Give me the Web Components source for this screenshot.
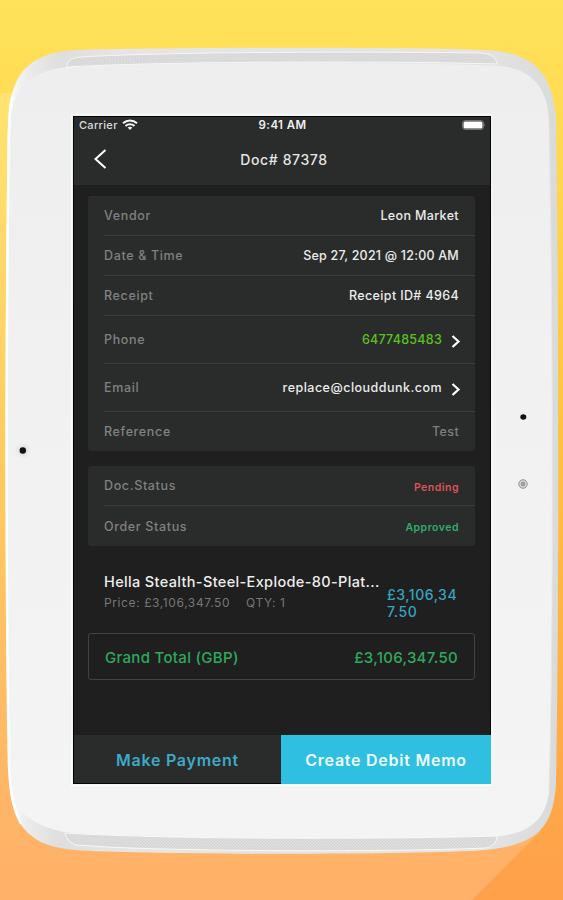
<!DOCTYPE html>
<html lang="en">
<head>
<meta charset="utf-8">
<title>Doc# 87378</title>
<style>
    body {
        margin: 0;
        font-family: Inter, "Liberation Sans", sans-serif;
    }
</style>
</head>
<body>
<tablet-frame>
    <doc-screen>
        <status-bar slot="top" carrier="Carrier" time="9:41 AM"></status-bar>
        <nav-bar slot="top">Doc# 87378</nav-bar>
        <info-card>
            <info-row label="Vendor">Leon Market</info-row>
            <info-row label="Date &amp; Time" style="--value-ls: .22px">Sep 27, 2021 @ 12:00 AM</info-row>
            <info-row label="Receipt">Receipt ID# 4964</info-row>
            <info-row label="Phone" link style="--value-color: #5bc31d; --value-ls: .25px">6477485483</info-row>
            <info-row label="Email" link style="--value-ls: .48px">replace@clouddunk.com</info-row>
            <info-row label="Reference" style="--value-color: #7d7e7e">Test</info-row>
        </info-card>
        <info-card>
            <info-row label="Doc.Status" small style="--value-color: #dd5558">Pending</info-row>
            <info-row label="Order Status" small style="--value-color: #2fae6c">Approved</info-row>
        </info-card>
        <line-item price="£3,106,347.50" qty="1" total="£3,106,347.50">Hella Stealth-Steel-Explode-80-Plat...</line-item>
        <grand-total amount="£3,106,347.50">Grand Total (GBP)</grand-total>
        <action-button slot="actions">Make Payment</action-button>
        <action-button slot="actions" primary>Create Debit Memo</action-button>
    </doc-screen>
</tablet-frame>

<script>
function defineElement(name, html, setup) {
    const template = document.createElement('template');
    template.innerHTML = html;

    customElements.define(name, class extends HTMLElement {
        constructor() {
            super();
            this.attachShadow({ mode: 'open' });
            this.shadowRoot.appendChild(template.content.cloneNode(true));
        }

        connectedCallback() {
            if (setup) {
                setup(this, this.shadowRoot);
            }
        }
    });
}

defineElement('tablet-frame', `
    <style>
        :host {
            display: block;
            position: relative;
            box-sizing: border-box;
            width: 563px;
            height: 900px;
            padding: 116px 72px 116px 73px;
            overflow: hidden;
        }

        svg {
            position: absolute;
            inset: 0;
        }

        .screen {
            position: relative;
            height: 668px;
            width: 418px;
        }
    </style>
    <svg width="563" height="900" viewBox="0 0 563 900">
        <defs>
            <linearGradient id="sky" x1="0" y1="0" x2="0" y2="1">
                <stop offset="0" stop-color="#ffe25a"/>
                <stop offset=".14" stop-color="#ffdb52"/>
                <stop offset=".5" stop-color="#ffc140"/>
                <stop offset="1" stop-color="#ffa04b"/>
            </linearGradient>
            <linearGradient id="face" x1="0" y1="0" x2="0" y2="1">
                <stop offset="0" stop-color="#eeeeee"/>
                <stop offset=".4" stop-color="#f1f1f1"/>
                <stop offset="1" stop-color="#f4f4f4"/>
            </linearGradient>
            <linearGradient id="edge" x1="0" y1="0" x2="1" y2="0">
                <stop offset="0" stop-color="#ffffff"/>
                <stop offset=".04" stop-color="#ebebeb"/>
                <stop offset=".1" stop-color="#dedede"/>
                <stop offset=".2" stop-color="#e5e5e5"/>
                <stop offset=".85" stop-color="#e4e4e4"/>
                <stop offset="1" stop-color="#d9dadb"/>
            </linearGradient>
            <radialGradient id="halo">
                <stop offset="0" stop-color="#c9c9c9"/>
                <stop offset="1" stop-color="#f2f2f2" stop-opacity="0"/>
            </radialGradient>
            <pattern id="mesh" width="3" height="3" patternUnits="userSpaceOnUse">
                <rect width="3" height="3" fill="#dfdfdf"/>
                <path d="M0 0L3 3M3 0L0 3" stroke="#d2d2d2" stroke-width=".6"/>
            </pattern>
        </defs>
        <rect width="563" height="900" fill="url(#sky)"/>
        <path d="M0 93L40 93V820H540V832L472 900H0Z" fill="#fff" opacity=".17"/>
        <!-- shell -->
        <path d="M8 125C9 78 25 53 75 50C145 47.500 420 46.500 480 50C535 51 552 73 556 118C559 300 559 640 556 784C553 825 540 845 485 850C420 855 145 855 75 850C33 847 14 828 10 790C4 640 5 300 8 125Z" fill="url(#edge)"/>
        <path d="M9 125C13 90 27 72 66 67C120 62 430 62 500 66C532 69 548 88 549 122C553 300 554 640 549 792C546 818 530 833 500 836C430 839.500 120 839 64 832C35 826 15 813 11 790C5 640 6 300 9 125Z" fill="url(#face)"/>
        <path d="M12 97C9.500 108 8.500 135 8.500 165C6 330 6 620 9 765C10 795 14 810 21 824" fill="none" stroke="#fff" stroke-width="2.500"/>
        <path d="M549 122C553 300 554 640 549 792" fill="none" stroke="#e5e5e5" stroke-width="1"/>
        <!-- speaker grilles -->
        <path d="M67 67C67 61 70 58.500 80 57C170 51.500 380 51.500 480 53C491 53.500 496 57 497 64C400 61 170 61 67 67Z" fill="url(#mesh)" stroke="#f6f6f6" stroke-width="1"/>
        <path d="M65 833C180 840 400 839 497 836C497 842 493 847 486 848C400 852 160 852 76 845C70 843 66 839 65 833Z" fill="url(#mesh)" stroke="#f8f8f8" stroke-width="1"/>
        <!-- camera and sensors -->
        <circle cx="23" cy="450.500" r="10" fill="url(#halo)"/>
        <circle cx="22.800" cy="450.500" r="3.200" fill="#111"/>
        <ellipse cx="523.300" cy="417" rx="3" ry="2.700" fill="#111"/>
        <circle cx="523" cy="484" r="4.200" fill="#dcdcdc" stroke="#8d8d8d"/>
        <circle cx="523" cy="484" r="1.900" fill="#aaa" stroke="#777" stroke-width=".7"/>
        <rect x="71.500" y="114.500" width="420.500" height="671" fill="none" stroke="#fff" stroke-opacity=".7"/>
    </svg>
    <div class="screen"><slot></slot></div>
`);

defineElement('doc-screen', `
    <style>
        :host {
            display: flex;
            flex-direction: column;
            box-sizing: border-box;
            height: 100%;
            border: 1px solid #050606;
            background: #1e1f1e;
            color: #eee;
        }

        .top {
            height: 68px;
            background: #2a2b2b;
        }

        main {
            flex: 1;
            display: flex;
            flex-direction: column;
            padding: 11px 15px 0 14px;
        }

        footer {
            display: flex;
            height: 49px;
            margin: 0 -1px -1px 0;
        }
    </style>
    <div class="top"><slot name="top"></slot></div>
    <main><slot></slot></main>
    <footer><slot name="actions"></slot></footer>
`);

defineElement('status-bar', `
    <style>
        :host {
            display: grid;
            grid-template-columns: 1fr auto 1fr;
            align-items: center;
            height: 16px;
            padding: 0 4px 0 5px;
            font-size: 11px;
            font-weight: 500;
            color: #ddd;
        }

        .left {
            display: flex;
            align-items: center;
            gap: 4px;
        }

        .carrier {
            letter-spacing: .3px;
        }

        .time {
            font-size: 11.5px;
            font-weight: 600;
            letter-spacing: .4px;
            color: #f0f0f0;
        }

        .battery {
            justify-self: end;
        }
    </style>
    <div class="left">
        <span class="carrier"></span>
        <svg width="16" height="12" viewBox="0 0 16 12" fill="none" stroke="#f2f2f2" stroke-width="2">
            <path d="M1 4.200C5 .5 11 .5 15 4.200M3.500 6.900C6 4.700 10 4.700 12.500 6.900"/>
            <path d="M5.600 8.500C7 7.400 9 7.400 10.400 8.500L8 11Z" fill="#f2f2f2" stroke="none"/>
        </svg>
    </div>
    <span class="time"></span>
    <svg class="battery" width="24" height="10" viewBox="0 0 24 10">
        <rect x=".5" y=".5" width="21" height="9" rx="2.500" fill="none" stroke="#6f7070"/>
        <rect x="1.500" y="1.500" width="19" height="7" rx="1.500" fill="#fff"/>
        <path d="M22.500 3.500Q24 5 22.500 6.500Z" fill="#8a8a8a"/>
    </svg>
`, (host, root) => {
    root.querySelector('.carrier').textContent = host.getAttribute('carrier');
    root.querySelector('.time').textContent = host.getAttribute('time');
});

defineElement('nav-bar', `
    <style>
        :host {
            display: grid;
            grid-template-columns: 1fr auto 1fr;
            align-items: center;
            height: 52px;
            padding: 0 19px 0 20px;
            box-sizing: border-box;
            font-size: 14px;
            font-weight: 500;
            letter-spacing: .6px;
            color: #e6e6e6;
        }

        .title {
            padding-left: 3px;
        }
    </style>
    <svg width="13" height="20" viewBox="0 0 13 20">
        <path d="M11.500 1L1.500 10L11.500 19" fill="none" stroke="#fff" stroke-width="2"/>
    </svg>
    <span class="title"><slot></slot></span>
`);

defineElement('info-card', `
    <style>
        :host {
            display: block;
            width: 387px;
            margin-bottom: 15px;
            border-radius: 3px;
            background: #2a2b2b;
        }
    </style>
    <slot></slot>
`);

defineElement('info-row', `
    <style>
        :host {
            display: flex;
            align-items: center;
            justify-content: space-between;
            box-sizing: border-box;
            height: 40px;
            margin-left: 16px;
            padding-right: 16px;
            border-bottom: 1px solid #3b3c3c;
            font-size: 12.5px;
            font-weight: 500;
        }

        :host([link]) {
            height: 48px;
        }

        :host(:last-child) {
            height: 39px;
            border-bottom: 0;
        }

        :host([small]:last-child) {
            height: 40px;
        }

        .label {
            letter-spacing: .65px;
            color: #808181;
        }

        .value {
            display: flex;
            align-items: center;
            gap: 9px;
            letter-spacing: var(--value-ls, .36px);
            color: var(--value-color, #ececec);
        }

        :host([small]) .value {
            padding-top: 3px;
            font-size: 10.5px;
            font-weight: 600;
            letter-spacing: .5px;
        }

        svg {
            display: none;
            margin: 3px -2px 0 0;
        }

        :host([link]) svg {
            display: block;
        }
    </style>
    <span class="label"></span>
    <span class="value">
        <slot></slot>
        <svg width="10" height="13" viewBox="0 0 10 13">
            <path d="M1.500 1L7.500 6.500L1.500 12" fill="none" stroke="#fff" stroke-width="2.200"/>
        </svg>
    </span>
`, (host, root) => {
    root.querySelector('.label').textContent = host.getAttribute('label');
});

defineElement('line-item', `
    <style>
        :host {
            display: flex;
            justify-content: space-between;
            height: 53px;
            margin: 10px 16px 9px 16px;
            box-sizing: border-box;
            padding-top: 1px;
        }

        .name {
            font-size: 14.5px;
            font-weight: 500;
            line-height: 20px;
            letter-spacing: .35px;
            white-space: nowrap;
        }

        .meta {
            display: flex;
            gap: 16px;
            font-size: 12px;
            line-height: 22px;
            letter-spacing: .6px;
            color: #777878;
        }

        .total {
            width: 72px;
            padding-top: 14px;
            font-size: 14px;
            font-weight: 500;
            line-height: 17px;
            letter-spacing: .55px;
            word-break: break-all;
            color: #37a4c4;
        }
    </style>
    <div>
        <div class="name"><slot></slot></div>
        <div class="meta"><span class="price"></span><span class="qty"></span></div>
    </div>
    <div class="total"></div>
`, (host, root) => {
    root.querySelector('.price').textContent = 'Price: ' + host.getAttribute('price');
    root.querySelector('.qty').textContent = 'QTY: ' + host.getAttribute('qty');
    root.querySelector('.total').textContent = host.getAttribute('total');
});

defineElement('grand-total', `
    <style>
        :host {
            display: flex;
            align-items: center;
            justify-content: space-between;
            box-sizing: border-box;
            width: 387px;
            height: 47px;
            padding: 1px 16px 0 16px;
            border: 1px solid #414242;
            border-radius: 3px;
            font-size: 15px;
            font-weight: 500;
            letter-spacing: .3px;
            color: #2faa5d;
        }
    </style>
    <span><slot></slot></span>
    <span class="amount"></span>
`, (host, root) => {
    root.querySelector('.amount').textContent = host.getAttribute('amount');
});

defineElement('action-button', `
    <style>
        :host {
            display: flex;
            align-items: center;
            justify-content: center;
            box-sizing: border-box;
            width: 207px;
            padding-top: 2px;
            background: #2a2b2b;
            border-bottom: 1px solid #050606;
            font-size: 16px;
            font-weight: 600;
            letter-spacing: .75px;
            color: #3fa9c8;
        }

        :host([primary]) {
            width: 210px;
            background: #2fbfe0;
            border-bottom-color: #2fbfe0;
            color: #eefcff;
        }
    </style>
    <slot></slot>
`);
</script>
</body>
</html>
